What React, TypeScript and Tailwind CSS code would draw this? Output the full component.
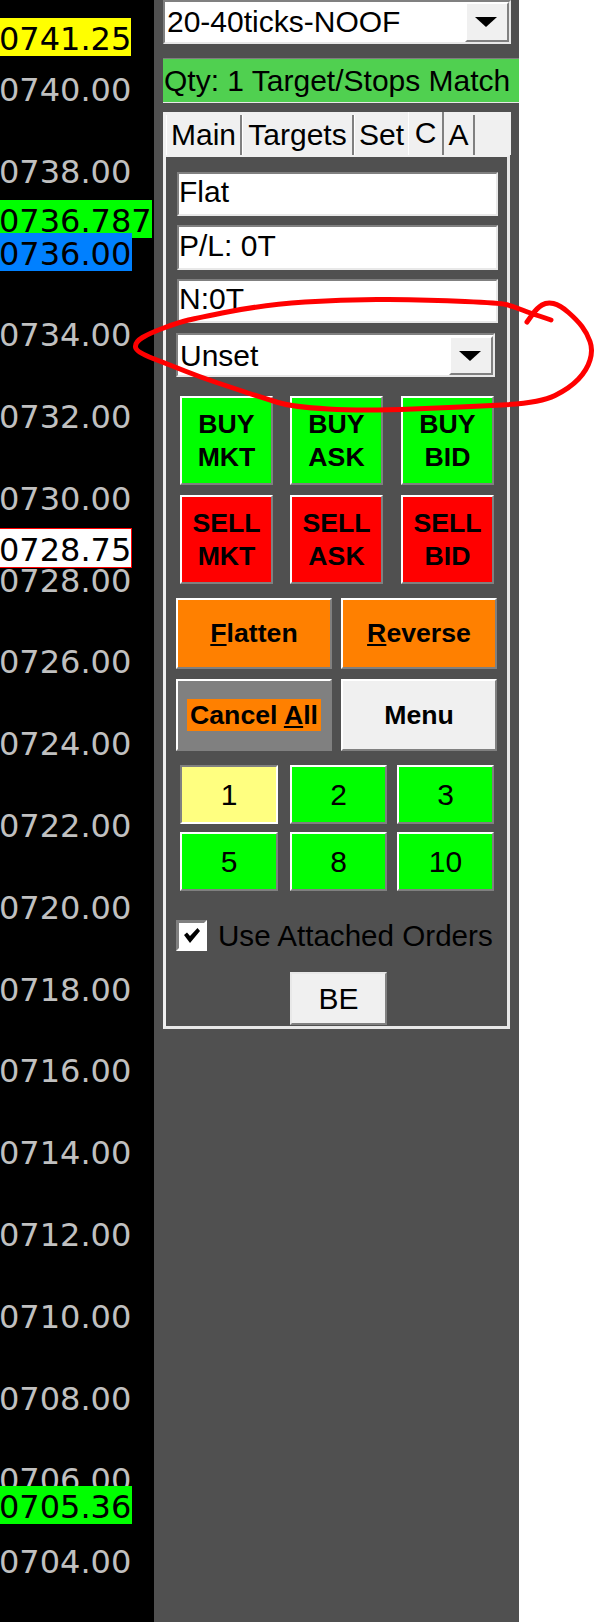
import React from 'react';

const PRICES = ['0740.00', '0738.00', '0736.00', '0734.00', '0732.00', '0730.00', '0728.00', '0726.00', '0724.00', '0722.00', '0720.00', '0718.00', '0716.00', '0714.00', '0712.00', '0710.00', '0708.00', '0706.00', '0704.00'];

const RAISED = 'border-2 border-t-white border-l-white border-r-[#808080] border-b-[#808080]';
const SUNKEN = 'border-2 border-t-[#808080] border-l-[#808080] border-r-[#e8e8e8] border-b-[#e8e8e8]';

// Hand-drawn annotation around the Unset dropdown, page coordinates
const SCRIBBLE: [number, number][] = [
  [551, 320], [527, 312], [512, 306], [500, 303], [430, 300], [347, 299], [263, 305], [197, 318], [180, 322], [150, 333],
  [135, 342], [136, 352], [170, 365], [200, 377], [230, 387], [263, 398], [293, 407], [363, 411], [463, 407], [540, 403],
  [570, 388], [587, 370], [593, 350], [587, 333], [577, 320], [560, 305], [547, 302], [537, 308], [527, 322],
];

const scribblePath = () => {
  let d = `M${SCRIBBLE[0][0]} ${SCRIBBLE[0][1]}`;
  for (let i = 1; i < SCRIBBLE.length - 1; i++) {
    const [x, y] = SCRIBBLE[i];
    const [nx, ny] = SCRIBBLE[i + 1];
    d += ` Q${x} ${y} ${(x + nx) / 2} ${(y + ny) / 2}`;
  }
  const last = SCRIBBLE[SCRIBBLE.length - 1];
  return d + ` L${last[0]} ${last[1]}`;
};

const PriceBadge: React.FC<{ text: string; top: string; cls: string }> = ({ text, top, cls }) => (
  <div className={`absolute left-0 flex items-center pt-[3px] leading-none text-black ${top} ${cls}`}>
    <span className="-ml-[1px]">{text}</span>
  </div>
);

const Arrow: React.FC = () => (
  <svg width="22" height="10" viewBox="0 0 22 10" className="block">
    <polygon points="0,0 22,0 11,10" fill="#000" />
  </svg>
);

const Dropdown: React.FC<{ label: string; cls: string }> = ({ label, cls }) => (
  <div className={`flex shrink-0 items-stretch bg-white ${SUNKEN} ${cls}`}>
    <div className="flex flex-1 items-center pl-[2px] leading-none">{label}</div>
    <div className={`flex w-[44px] items-center justify-center bg-[#f0f0f0] pr-[2px] ${RAISED}`}>
      <Arrow />
    </div>
  </div>
);

const Field: React.FC<{ label: string; cls: string }> = ({ label, cls }) => (
  <div className={`ml-[11px] flex w-[321px] items-center bg-white pb-[4px] leading-none ${SUNKEN} ${cls}`}>{label}</div>
);

const TradeRow: React.FC<{ top: string; bg: string; side: string; kinds: string[] }> = ({ top, bg, side, kinds }) => (
  <div className={`ml-[14px] flex ${top}`}>
    {kinds.map((k, i) => (
      <div key={k} className={`flex h-[89px] w-[93px] flex-col items-center justify-center text-[26.67px] font-bold leading-[32.5px] ${bg} ${RAISED} ${i === 0 ? '' : i === 1 ? 'ml-[17px]' : 'ml-[18px]'}`}>
        <span>{side}</span>
        <span>{k}</span>
      </div>
    ))}
  </div>
);

const QtyButton: React.FC<{ n: string; cls: string }> = ({ n, cls }) => (
  <div className={`flex h-[59px] items-center justify-center bg-[#00ff00] leading-none ${RAISED} ${cls}`}>{n}</div>
);

export default function App() {
  return (
    <div className="relative flex h-[1622px] w-[594px] overflow-hidden bg-white font-['Liberation_Sans',Arial,sans-serif] text-[30px] text-black">
      {/* price axis */}
      <div className="relative w-[154px] shrink-0 bg-black pt-[49px] font-['DejaVu_Sans',Verdana,sans-serif] text-[32px]">
        {PRICES.map((p) => (
          <div key={p} className="-ml-[1px] flex h-[81.8px] items-center leading-none text-[#c0c0c0]">{p}</div>
        ))}
        <PriceBadge text="0741.25" top="top-[18px]" cls="h-[38px] w-[131px] bg-[#ffff00]" />
        <PriceBadge text="0736.787" top="top-[200px]" cls="h-[38px] w-[152px] bg-[#00ff00]" />
        <PriceBadge text="0736.00" top="top-[233px]" cls="h-[38px] w-[132px] bg-[#0080ff]" />
        <PriceBadge text="0728.75" top="top-[528px]" cls="h-[40px] w-[132px] border border-l-0 border-[#ff0000] bg-white" />
        <PriceBadge text="0705.36" top="top-[1486px]" cls="h-[38px] w-[132px] bg-[#00ff00]" />
      </div>

      {/* order panel */}
      <div className="flex w-[365px] shrink-0 flex-col bg-[#505050] pl-[9px]">
        <Dropdown label="20-40ticks-NOOF" cls="h-[44px] w-[348px]" />
        <div className="mt-[14px] flex h-[45px] items-center border-t border-b border-t-[#808080] border-b-[#e8e8e8] bg-[#50d050] pl-[1px] leading-none">
          Qty: 1 Target/Stops Match
        </div>
        <div className="mt-[9px] flex h-[43px] w-[348px] items-end bg-[#f0f0f0] pl-[3px]">
          <div className="flex h-[40px] w-[76px] items-center justify-center border-r-2 border-l border-r-[#808080] border-l-white leading-none">Main</div>
          <div className="flex h-[40px] w-[112px] items-center justify-center border-r-2 border-l border-r-[#808080] border-l-white leading-none">Targets</div>
          <div className="flex h-[40px] w-[54px] items-center justify-center border-l border-l-white leading-none">Set</div>
          <div className="flex h-[43px] w-[36px] items-start justify-center border-r-2 border-l border-r-[#808080] border-l-white pt-[6px] leading-none">C</div>
          <div className="flex h-[40px] w-[31px] items-center justify-center border-r-2 border-r-[#808080] leading-none">A</div>
        </div>

        <div className="flex h-[874px] w-[347px] flex-col border-t-2 border-r-[3px] border-b-[3px] border-l-[3px] border-t-[#f0f0f0] border-r-[#e8e8e8] border-b-[#e8e8e8] border-l-[#f0f0f0]">
          <Field label="Flat" cls="mt-[15px] h-[44px]" />
          <Field label="P/L: 0T" cls="mt-[9px] h-[45px]" />
          <Field label="N:0T" cls="mt-[9px] h-[44px]" />
          <Dropdown label="Unset" cls="ml-[10px] mt-[10px] h-[44px] w-[319px] pt-[1px]" />

          <TradeRow top="mt-[19px]" bg="bg-[#00ff00]" side="BUY" kinds={['MKT', 'ASK', 'BID']} />
          <TradeRow top="mt-[10px]" bg="bg-[#ff0000]" side="SELL" kinds={['MKT', 'ASK', 'BID']} />

          <div className="ml-[10px] mt-[14px] flex gap-[9px] text-[26.67px] font-bold leading-none">
            <div className={`flex h-[71px] w-[156px] items-center justify-center bg-[#ff8000] ${RAISED}`}>
              <span><span className="underline">F</span>latten</span>
            </div>
            <div className={`flex h-[71px] w-[156px] items-center justify-center bg-[#ff8000] ${RAISED}`}>
              <span><span className="underline">R</span>everse</span>
            </div>
          </div>
          <div className="ml-[10px] mt-[10px] flex gap-[9px] text-[26.67px] font-bold leading-none">
            <div className={`flex h-[72px] w-[156px] items-center justify-center bg-[#808080] ${RAISED}`}>
              <span className="flex h-[32px] w-[134px] items-center justify-center bg-[#ff8000]">
                <span>Cancel <span className="underline">A</span>ll</span>
              </span>
            </div>
            <div className={`flex h-[72px] w-[156px] items-center justify-center bg-[#f0f0f0] ${RAISED}`}>Menu</div>
          </div>

          <div className="ml-[14px] mt-[14px] flex">
            <div className="flex h-[59px] w-[98px] items-center justify-center border-2 border-t-[#808080] border-r-white border-b-white border-l-[#808080] bg-[#ffff80] leading-none">1</div>
            <QtyButton n="2" cls="ml-[12px] w-[97px]" />
            <QtyButton n="3" cls="ml-[10px] w-[97px]" />
          </div>
          <div className="ml-[14px] mt-[8px] flex">
            <QtyButton n="5" cls="w-[98px]" />
            <QtyButton n="8" cls="ml-[12px] w-[97px]" />
            <QtyButton n="10" cls="ml-[10px] w-[97px]" />
          </div>

          <div className="ml-[10px] mt-[29px] flex h-[31px] items-center">
            <div className="flex h-[31px] w-[31px] items-center justify-center border-[3px] border-t-[#808080] border-r-white border-b-white border-l-[#808080] bg-white">
              <svg width="16" height="15" viewBox="0 0 16 15" className="block">
                <polygon points="0,7 3,4.5 6,8 13.5,0 16,3 6,15" fill="#000" />
              </svg>
            </div>
            <span className="ml-[11px] whitespace-nowrap text-[29.6px] leading-none">Use Attached Orders</span>
          </div>

          <div className="ml-[124px] mt-[21px] flex h-[53px] w-[97px] items-center justify-center border-2 border-t-[#e8e8e8] border-r-[#808080] border-b-[#808080] border-l-[#e8e8e8] bg-[#f0f0f0] leading-none">BE</div>
        </div>
      </div>

      {/* red marker scribble drawn on top of the screenshot */}
      <svg width="594" height="1622" viewBox="0 0 594 1622" className="pointer-events-none absolute left-0 top-0">
        <path d={scribblePath()} fill="none" stroke="#ff0000" strokeWidth="5" strokeLinecap="round" strokeLinejoin="round" />
      </svg>
    </div>
  );
}
